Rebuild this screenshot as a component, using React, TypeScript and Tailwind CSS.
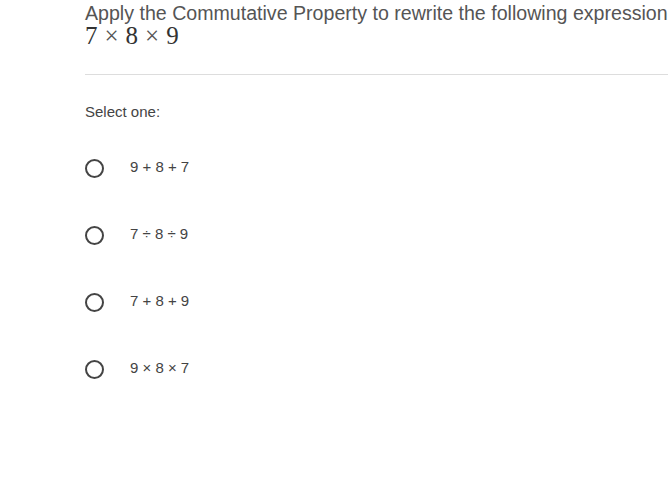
const options = ["9 + 8 + 7", "7 ÷ 8 ÷ 9", "7 + 8 + 9", "9 × 8 × 7"];

export default function App() {
  return (
    <div className="w-[668px] h-[485px] overflow-hidden bg-white font-['Liberation_Sans',Arial,sans-serif]">
      <div className="pl-[85px]">
        <div className="whitespace-nowrap text-[19.6px] leading-[24px] text-[#555] pt-[1px]">
          Apply the Commutative Property to rewrite the following expression
        </div>
        <div className="flex h-[22px] items-center gap-[7px] font-['Liberation_Serif',serif] text-[25px] leading-[22px] text-[#333]">
          <span>7</span>
          <span className="text-[#555]">×</span>
          <span>8</span>
          <span className="text-[#555]">×</span>
          <span>9</span>
        </div>
        <div className="mt-[27px] h-px w-[600px] bg-[#ddd]" />
        <div className="mt-[28px] text-[15px] leading-[18px] text-[#444]">Select one:</div>
        <div className="mt-[37px] flex flex-col gap-[47px]">
          {options.map((o) => (
            <label key={o} className="flex items-center h-[20px]">
              <span className="w-[19px] h-[19px] rounded-full border-2 border-[#444]" />
              <span className="ml-[26px] text-[15px] leading-[18px] text-[#444] -mt-[3px]">{o}</span>
            </label>
          ))}
        </div>
      </div>
    </div>
  );
}
